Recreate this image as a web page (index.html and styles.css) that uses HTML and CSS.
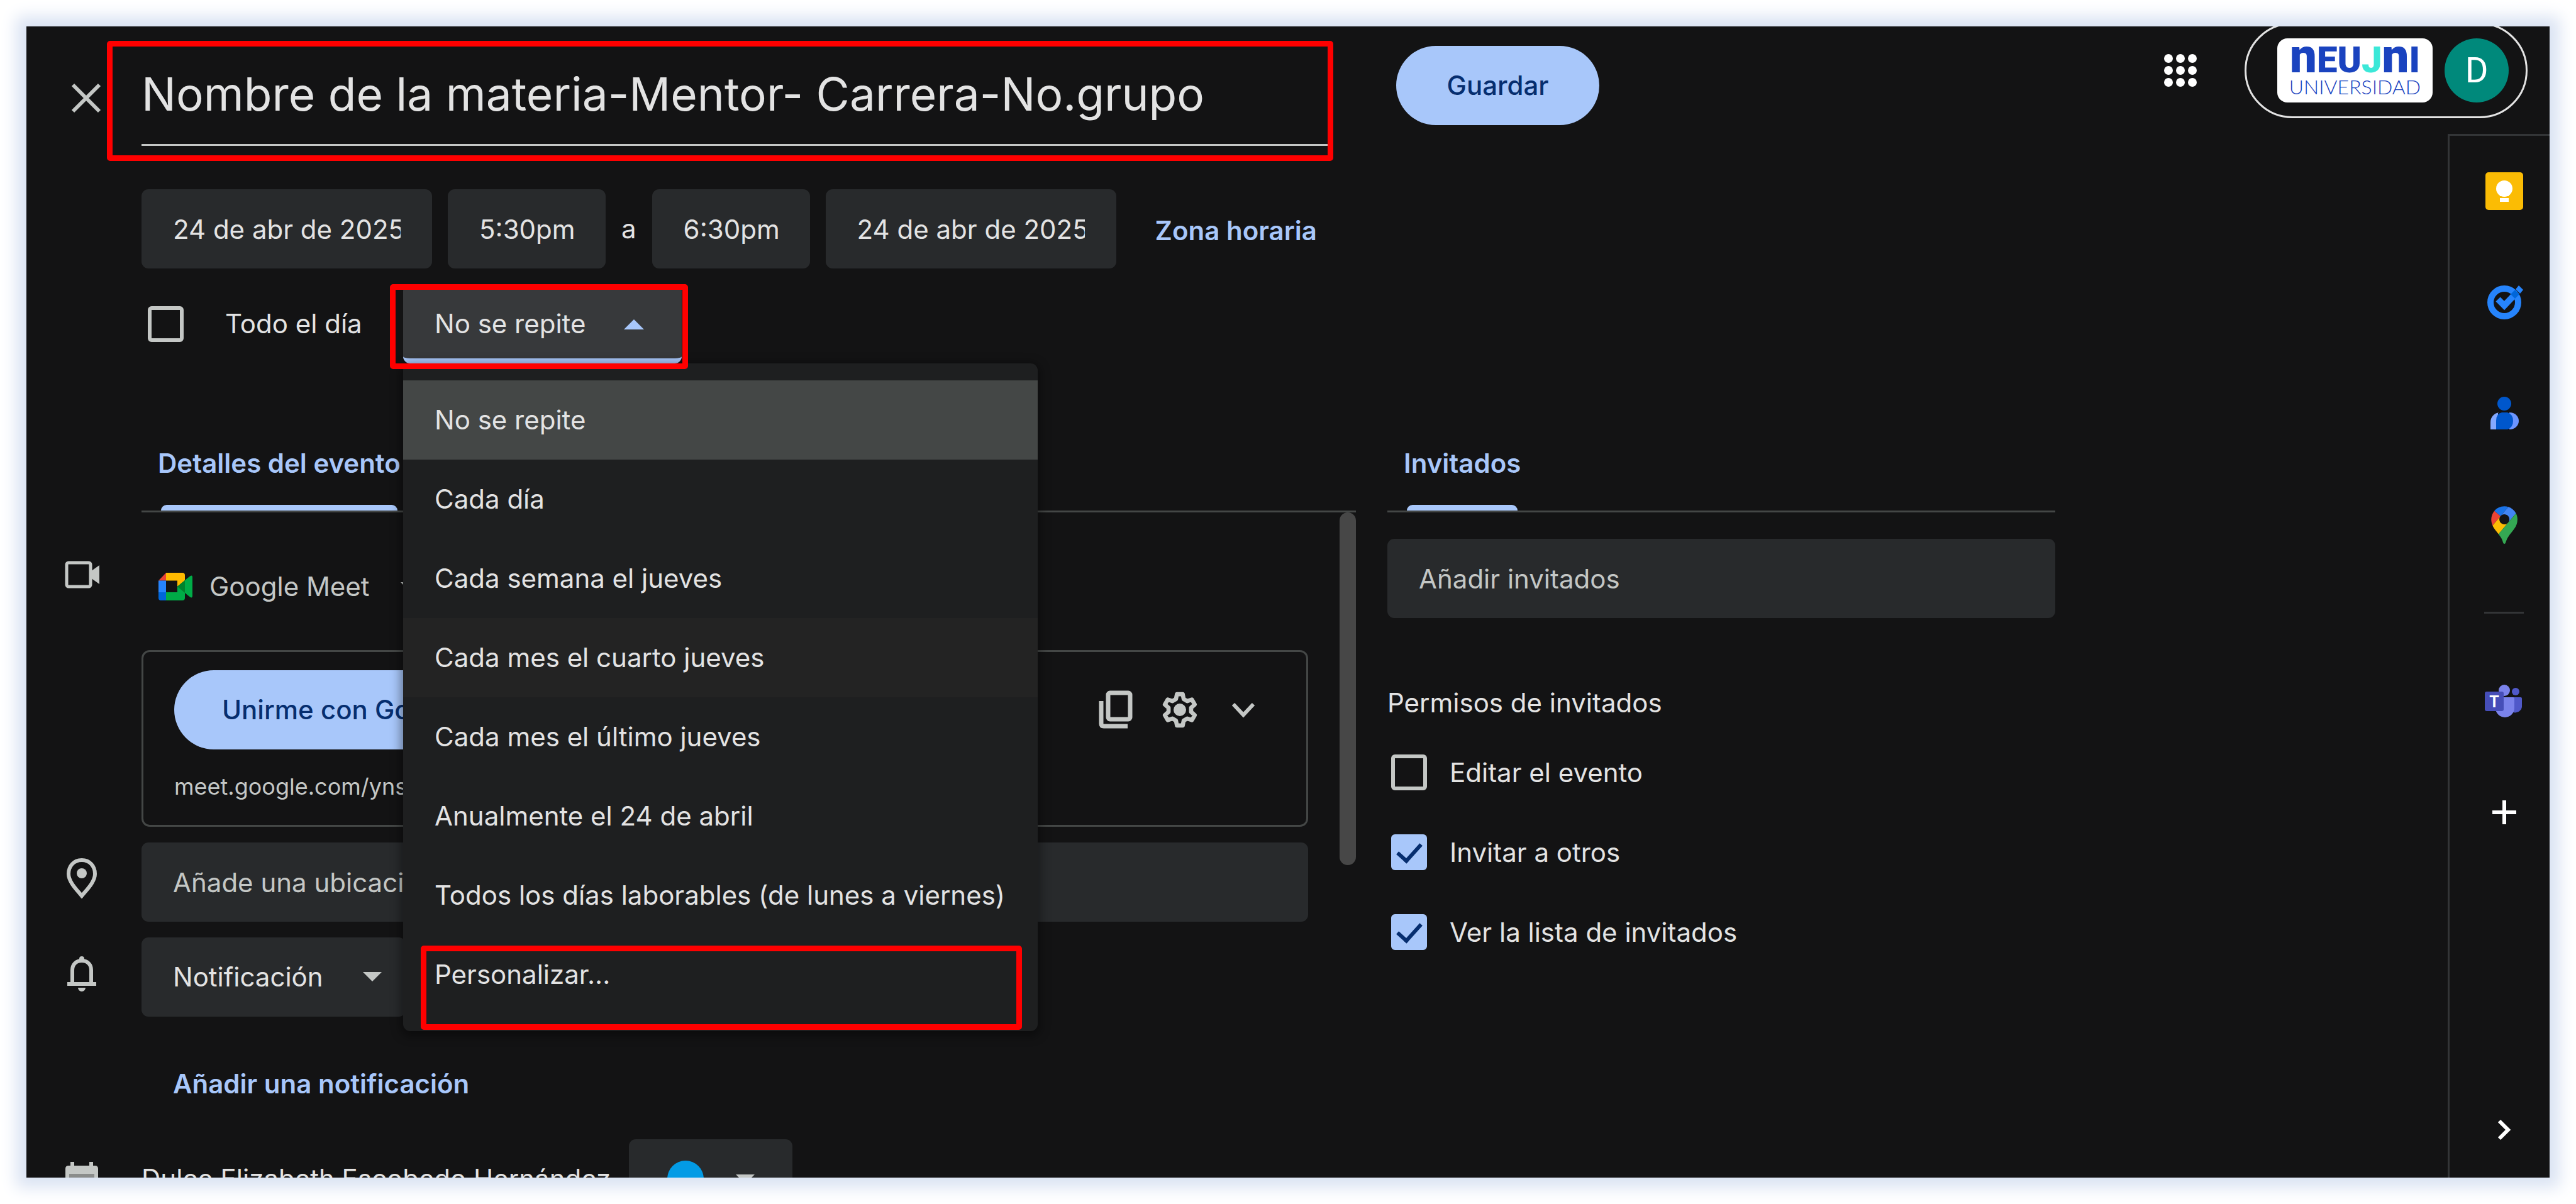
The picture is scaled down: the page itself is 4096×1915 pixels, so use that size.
FILE: index.html
```html
<!DOCTYPE html>
<html lang="es">
<head>
<meta charset="utf-8">
<meta name="viewport" content="width=device-width, initial-scale=1">
<title>Detalles del evento</title>
<link rel="stylesheet" href="styles.css">
</head>
<body>
<div class="panel">
  <header class="topbar">
    <button class="icon-button close" type="button" aria-label="Cerrar">
      <svg class="icon" viewBox="0 0 64 64"><path d="M11 11L53 53M53 11L11 53" fill="none" stroke="currentColor" stroke-width="6"/></svg>
    </button>
    <div class="title-field marked">
      <input class="title-input" type="text" aria-label="Título" value="Nombre de la materia-Mentor- Carrera-No.grupo">
    </div>
    <button class="pill-button save" type="button">Guardar</button>
    <div class="tools">
      <button class="icon-button" type="button" aria-label="Aplicaciones">
        <svg class="icon white" viewBox="0 0 64 64" fill="currentColor"><circle cx="13" cy="13" r="7"/><circle cx="32" cy="13" r="7"/><circle cx="51" cy="13" r="7"/><circle cx="13" cy="32" r="7"/><circle cx="32" cy="32" r="7"/><circle cx="51" cy="32" r="7"/><circle cx="13" cy="51" r="7"/><circle cx="32" cy="51" r="7"/><circle cx="51" cy="51" r="7"/></svg>
      </button>
      <div class="account">
        <div class="brand">
          <div class="brand-name"><span class="brand-n">n</span>EU<span class="brand-j">J</span><span class="brand-n">n</span>I</div>
          <div class="brand-sub">UNIVERSIDAD</div>
        </div>
        <button class="avatar" type="button">D</button>
      </div>
    </div>
  </header>

  <main class="event">
    <section class="when">
      <div class="when-row">
        <input class="field date" type="text" aria-label="Fecha de inicio" value="24 de abr de 2025">
        <input class="field time" type="text" aria-label="Hora de inicio" value="5:30pm">
        <span>a</span>
        <input class="field time" type="text" aria-label="Hora de fin" value="6:30pm">
        <input class="field date" type="text" aria-label="Fecha de fin" value="24 de abr de 2025">
        <button class="link-button zone" type="button">Zona horaria</button>
      </div>
      <div class="when-row repeat-row">
        <label class="all-day"><input class="check" type="checkbox">Todo el día</label>
        <div class="repeat marked">
          <select class="repeat-select" aria-label="Repetición"><option>No se repite</option></select>
          <svg class="repeat-arrow" viewBox="0 0 32 16"><path d="M0 16L16 0L32 16z" fill="#a8c7fa"/></svg>
          <ul class="menu">
            <li><button class="menu-item selected" type="button">No se repite</button></li>
            <li><button class="menu-item" type="button">Cada día</button></li>
            <li><button class="menu-item" type="button">Cada semana el jueves</button></li>
            <li><button class="menu-item hovered" type="button">Cada mes el cuarto jueves</button></li>
            <li><button class="menu-item" type="button">Cada mes el último jueves</button></li>
            <li><button class="menu-item" type="button">Anualmente el 24 de abril</button></li>
            <li><button class="menu-item" type="button">Todos los días laborables (de lunes a viernes)</button></li>
            <li class="custom marked"><button class="menu-item" type="button">Personalizar...</button></li>
          </ul>
        </div>
      </div>
    </section>

    <div class="columns">
      <section class="details">
        <div class="tabs"><button class="tab" type="button">Detalles del evento</button></div>
        <div class="scroller">
          <div class="rows">
            <div class="row">
              <svg class="icon gutter" viewBox="0 0 64 64"><rect x="8" y="13" width="38" height="38" rx="3" fill="none" stroke="currentColor" stroke-width="5"/><path d="M46 27L60 17V47L46 37z" fill="currentColor"/></svg>
              <button class="meet" type="button">
                <svg class="meet-logo" viewBox="0 0 54 44"><path fill="#ea4335" d="M0 12.500L12 0V12.500z"/><path fill="#ffba00" d="M12 0H38Q42 0 42 4V12L30 22V12.500H12z"/><path fill="#2684fc" d="M0 12.500H12V31H0z"/><path fill="#0066da" d="M0 31H12V44H4Q0 44 0 40z"/><path fill="#00ac47" d="M12 31H30V22L42 12L50 5.500Q54 3 54 7V37Q54 41 50 38.500L42 32V40Q42 44 38 44H12z"/><path fill="#00832d" d="M30 22L42 12V32z"/></svg>
                Google Meet
                <svg class="arrow-down" viewBox="0 0 30 15"><path d="M0 0H30L15 15z" fill="currentColor"/></svg>
              </button>
            </div>
            <div class="row">
              <div class="card">
                <div class="card-head">
                  <button class="pill-button join" type="button">Unirme con Google Meet</button>
                  <div class="card-actions">
                    <button class="icon-button" type="button" aria-label="Copiar"><svg class="icon" viewBox="0 0 64 64" fill="none" stroke="currentColor" stroke-width="7"><rect x="19" y="5" width="35" height="42" rx="3"/><path d="M8 18V54Q8 58 12 58H50"/></svg></button>
                    <button class="icon-button" type="button" aria-label="Ajustes"><svg class="icon" viewBox="-0.500 -0.500 25 25"><path fill="none" stroke="currentColor" stroke-width="2.600" stroke-linejoin="round" d="M10.200 2.300H13.800L14.400 5.300L16.600 6.600L19.500 5.600L21.300 8.700L19 10.700V13.300L21.300 15.300L19.500 18.400L16.600 17.400L14.400 18.700L13.800 21.700H10.200L9.600 18.700L7.400 17.400L4.500 18.400L2.700 15.300L5 13.300V10.700L2.700 8.700L4.500 5.600L7.400 6.600L9.600 5.300z"/><circle cx="12" cy="12" r="3.900" fill="currentColor"/></svg></button>
                    <button class="icon-button" type="button" aria-label="Más detalles"><svg class="icon" viewBox="0 0 64 64"><path d="M16 23L32 40L48 23" fill="none" stroke="currentColor" stroke-width="6"/></svg></button>
                  </div>
                </div>
                <a class="meet-link" href="#meet">meet.google.com/yns</a>
              </div>
            </div>
            <div class="row">
              <svg class="icon gutter" viewBox="0 0 64 64"><path d="M32 3C19 3 11 13 11 25C11 38 25 51 32 60C39 51 53 38 53 25C53 13 45 3 32 3z" fill="none" stroke="currentColor" stroke-width="6"/><circle cx="32" cy="24" r="8" fill="currentColor"/></svg>
              <input class="field location" type="text" aria-label="Ubicación" placeholder="Añade una ubicación">
            </div>
            <div class="row">
              <svg class="icon gutter" viewBox="0 0 64 64"><path d="M17 49V27C17 18 23 12 32 12S47 18 47 27V49" fill="none" stroke="currentColor" stroke-width="6"/><path d="M9 46H55V52H9zM28 12V9A4 4 0 0 1 36 9V12zM26 55H38A6 6 0 0 1 26 55z" fill="currentColor"/></svg>
              <div class="notify">
                <select class="field notify-select" aria-label="Tipo de aviso"><option>Notificación</option></select>
                <svg class="arrow-down notify-arrow" viewBox="0 0 30 15"><path d="M0 0H30L15 15z" fill="currentColor"/></svg>
              </div>
            </div>
            <div class="row add-row"><button class="link-button add" type="button">Añadir una notificación</button></div>
            <div class="row">
              <svg class="icon gutter" viewBox="0 0 64 64"><path fill="currentColor" d="M14 11H20V17H44V11H50V17H53Q58 17 58 22V64H6V22Q6 17 11 17H14z"/><path d="M12 30H52V64H12z" fill="#8a8c8b"/></svg>
              <span class="owner">Dulce Elizabeth Escobedo Hernández</span>
              <button class="field color" type="button" aria-label="Color del evento">
                <span class="dot"></span>
                <svg class="arrow-down" viewBox="0 0 30 15"><path d="M0 0H30L15 15z" fill="currentColor"/></svg>
              </button>
            </div>
          </div>
          <div class="scrollbar"></div>
        </div>
      </section>

      <section class="guests">
        <div class="tabs"><button class="tab" type="button">Invitados</button></div>
        <input class="field guest-input" type="text" aria-label="Añadir invitados" placeholder="Añadir invitados">
        <h2 class="permissions">Permisos de invitados</h2>
        <label class="option"><input class="check" type="checkbox">Editar el evento</label>
        <label class="option"><input class="check" type="checkbox" checked>Invitar a otros</label>
        <label class="option"><input class="check" type="checkbox" checked>Ver la lista de invitados</label>
      </section>
    </div>
  </main>

  <aside class="sidebar">
    <button class="side-button" type="button" aria-label="Keep"><svg class="icon" viewBox="0 0 64 64"><rect x="2" y="2" width="60" height="60" rx="5" fill="#fbbc04"/><circle cx="32" cy="28" r="13" fill="#fff"/><path d="M25 36H39V40H25zM25 43H39V49H25z" fill="#fff"/></svg></button>
    <button class="side-button" type="button" aria-label="Tasks"><svg class="icon" viewBox="0 0 64 64"><circle cx="32" cy="32" r="22" fill="none" stroke="#2684fc" stroke-width="10"/><path d="M22 27L32 37L51 17" fill="none" stroke="#2684fc" stroke-width="10"/><path d="M42 19L49 12L56 19L49 26z" fill="#0066da"/><path d="M50 11L55 5L62 12L57 18z" fill="#2684fc"/></svg></button>
    <button class="side-button" type="button" aria-label="Contactos"><svg class="icon" viewBox="0 0 64 64"><circle cx="32" cy="16" r="11" fill="#0057cc"/><path d="M24 30C15 31 10 38 10 46V57H22V30z" fill="#85a9ff"/><path d="M40 30C49 30 55 36 55 43.500S49 57 40 57z" fill="#6c95ff"/><path d="M28 30H37Q46 33 46 43.500T37 57H19V43Q19 32 28 30z" fill="#0057cc"/></svg></button>
    <button class="side-button" type="button" aria-label="Maps"><svg class="icon" viewBox="-23 -5 138 142"><path fill="#1a73e8" d="M60.200 2.200C55.800.8 51 0 46.100 0 32 0 19.300 6.400 10.800 16.500l21.800 18.300z"/><path fill="#ea4335" d="M10.800 16.500C4.100 24.500 0 34.900 0 46.100c0 8.700 1.700 15.700 4.600 22l28-33.300z"/><path fill="#4285f4" d="M46.200 28.500c9.800 0 17.700 7.900 17.700 17.700 0 4.300-1.600 8.300-4.200 11.400L87.200 24.900C81.600 14.100 71.900 5.900 60.200 2.200L32.600 34.800c3.300-3.800 8.100-6.300 13.600-6.300"/><path fill="#fbbc04" d="M46.200 63.800c-9.800 0-17.700-7.900-17.700-17.700 0-4.300 1.500-8.300 4.100-11.300l-28 33.300c4.800 10.600 12.800 19.200 21 29.900l34.100-40.500c-3.300 3.900-8.100 6.300-13.500 6.300"/><path fill="#34a853" d="M59.100 109.200c15.400-24.100 33.300-35 33.300-63 0-7.700-1.900-14.900-5.200-21.300L25.600 98c2.600 3.400 5.300 7.300 7.900 11.300 9.400 14.500 6.800 23.100 12.800 23.100s3.400-8.700 12.800-23.200"/></svg></button>
    <hr class="side-rule">
    <button class="side-button" type="button" aria-label="Teams"><svg class="icon" viewBox="0 0 64 64"><circle cx="50" cy="17" r="6" fill="#5059c9"/><path d="M46 26H58Q60 26 60 28V41A11 10 0 0 1 46 50z" fill="#5059c9"/><circle cx="32" cy="15" r="9" fill="#7b83eb"/><path d="M18 26H46Q48 26 48 28V43A15 15 0 0 1 18 43z" fill="#7b83eb"/><rect x="1" y="17" width="30" height="31" rx="3" fill="#464eb8"/><text x="16" y="42" text-anchor="middle" font-family="Roboto, sans-serif" font-weight="700" font-size="25" fill="#fff">T</text></svg></button>
    <button class="side-button" type="button" aria-label="Añadir complementos"><svg class="icon white" viewBox="0 0 64 64"><path d="M32 13V51M13 32H51" fill="none" stroke="currentColor" stroke-width="6"/></svg></button>
    <button class="side-button last" type="button" aria-label="Ocultar panel"><svg class="icon white" viewBox="0 0 64 64"><path d="M24 18L38 32L24 46" fill="none" stroke="currentColor" stroke-width="6"/></svg></button>
  </aside>
</div>
</body>
</html>
```
FILE: styles.css
```css
* {
  box-sizing: border-box;
}

body {
  margin: 0;
  padding: 42px;
  background: #fff;
  color: #e3e3e3;
  font: 42px/60px Inter, Roboto, sans-serif;
}

button,
input,
select {
  margin: 0;
  border: 0;
  padding: 0;
  background: none;
  color: inherit;
  font: inherit;
}

.panel {
  display: grid;
  grid-template-columns: minmax(0, 1fr) 162px;
  grid-template-rows: 171px minmax(0, 1fr);
  height: calc(100vh - 84px);
  overflow: hidden;
  background: #131314;
  box-shadow: 0 0 24px 16px #dae3f3;
}

.icon {
  display: block;
  flex: none;
  width: 64px;
  height: 64px;
  color: #c4c7c5;
}

.white {
  color: #fff;
}

/* Red frame that points out a step */
.marked {
  position: relative;
}

.marked::after {
  content: "";
  position: absolute;
  z-index: 3;
  border: 9px solid #f00;
  border-radius: 5px;
  pointer-events: none;
}

/* Top bar */
.topbar {
  grid-column: 1 / -1;
  display: flex;
  align-items: flex-start;
  padding-right: 35px;
}

.close {
  margin: 82px 56px 0 63px;
}

.title-field {
  flex: 0 1 1895px;
  margin-top: 28px;
}

.title-field::after {
  inset: -5px 0 -24px -55px;
}

.title-input {
  display: block;
  width: 100%;
  height: 162px;
  border-bottom: 3px solid #c4c7c5;
  font-size: 73px;
}

.pill-button {
  height: 126px;
  border-radius: 63px;
  padding: 0 76px;
  background: #a8c7fa;
  color: #062e6f;
  font-weight: 500;
}

.save {
  width: 323px;
  margin: 31px 0 0 100px;
}

.tools {
  display: flex;
  align-items: center;
  gap: 70px;
  margin: -6px 0 0 auto;
}

.account {
  display: flex;
  align-items: center;
  gap: 19px;
  height: 152px;
  padding: 0 27px 0 49px;
  border: 3px solid #e3e3e3;
  border-radius: 76px;
}

.brand {
  display: flex;
  flex-direction: column;
  align-items: center;
  justify-content: center;
  width: 247px;
  height: 102px;
  padding-bottom: 4px;
  border-radius: 16px;
  background: #fff;
  color: #1a43bf;
}

.brand-name {
  font: 900 58px/50px Roboto, sans-serif;
}

.brand-n {
  font-size: 76px;
}

.brand-j {
  color: #3be8d8;
}

.brand-sub {
  font: 300 32px/36px Lato, sans-serif;
}

.avatar {
  width: 102px;
  height: 102px;
  border-radius: 50%;
  background: #00897b;
  color: #fff;
  font-family: Roboto, sans-serif;
  font-size: 56px;
}

/* Event form */
.event {
  display: flex;
  flex-direction: column;
  min-width: 0;
}

.when {
  display: flex;
  flex-direction: column;
  gap: 25px;
  padding: 88px 0 0 183px;
}

.when-row {
  display: flex;
  align-items: center;
  gap: 25px;
}

.field {
  height: 126px;
  border-radius: 11px;
  padding: 0 50px;
  background: #282a2c;
}

.field::placeholder {
  color: #c4c7c5;
  opacity: 1;
}

.date {
  width: 462px;
}

.time {
  width: 251px;
}

.link-button {
  color: #a8c7fa;
  font-weight: 600;
}

.zone {
  padding: 6px 0 0 37px;
}

.repeat-row {
  gap: 0;
}

.all-day {
  display: flex;
  align-items: center;
  gap: 66px;
  width: 416px;
  padding-left: 10px;
}

.check {
  appearance: none;
  display: grid;
  place-items: center;
  flex: none;
  width: 57px;
  height: 57px;
  border: 6px solid #c4c7c5;
  border-radius: 6px;
}

.check:checked {
  border-color: #a8c7fa;
  background: #a8c7fa;
}

.check:checked::after {
  content: "";
  width: 16px;
  height: 32px;
  margin-bottom: 8px;
  border: solid #062e6f;
  border-width: 0 6px 6px 0;
  transform: rotate(42deg);
}

.repeat {
  width: 443px;
}

.repeat::after {
  inset: 0 -10px -9px -21px;
}

.repeat-select {
  appearance: none;
  display: block;
  width: 100%;
  height: 126px;
  border-bottom: 8px solid #a8c7fa;
  border-radius: 11px;
  padding: 8px 50px 0;
  background: #37393b;
}

.repeat-arrow {
  position: absolute;
  top: 56px;
  right: 60px;
  width: 32px;
  height: 16px;
}

.menu {
  position: absolute;
  z-index: 2;
  top: 100%;
  left: 0;
  width: 1009px;
  margin: 0;
  padding: 27px 0;
  border-radius: 11px;
  background: #1e1f20;
  box-shadow: 0 4px 16px 4px rgb(0 0 0 / 40%);
  list-style: none;
}

.menu-item {
  display: block;
  width: 100%;
  height: 126px;
  padding: 0 50px;
  text-align: left;
  white-space: nowrap;
}

.selected {
  background: #444746;
}

.hovered {
  background: #232323;
}

.custom::after {
  inset: 17px 25px -25px 28px;
}

.columns {
  display: grid;
  grid-template-columns: minmax(0, 2114fr) minmax(0, 1062fr);
  gap: 50px;
  padding: 129px 624px 0 0;
}

.details .tabs {
  margin-left: 183px;
}

.tabs {
  display: flex;
  padding-left: 26px;
  border-bottom: 3px solid #444746;
}

.tab {
  display: flex;
  flex-direction: column;
  gap: 36px;
  color: #a8c7fa;
  font-weight: 600;
}

.tab::after {
  content: "";
  align-self: stretch;
  height: 9px;
  margin: 0 5px;
  border-radius: 9px 9px 0 0;
  background: #a8c7fa;
}

.scroller {
  display: flex;
  align-items: flex-start;
  gap: 50px;
}

.rows {
  flex: 1;
  display: flex;
  flex-direction: column;
  gap: 25px;
  min-width: 0;
  padding-top: 42px;
}

.scrollbar {
  width: 26px;
  height: 561px;
  border-radius: 13px;
  background: #474747;
}

.row {
  display: grid;
  grid-template-columns: 183px minmax(0, 1fr);
  align-items: start;
}

.row > :not(.gutter) {
  grid-column: 2;
}

.gutter {
  margin: 25px 0 0 56px;
}

.row > .owner {
  display: inline;
  line-height: 126px;
}

.row:last-child {
  grid-template-columns: 183px auto 1fr;
}

.row > .color {
  grid-column: 3;
  display: flex;
  align-items: center;
  gap: 51px;
  width: 260px;
  margin-left: 29px;
  padding: 0 56px 0 61px;
}

.dot {
  width: 58px;
  height: 58px;
  border-radius: 50%;
  background: #039be5;
}

.meet {
  display: flex;
  align-items: center;
  gap: 27px;
  height: 152px;
  padding-left: 27px;
  color: #c4c7c5;
}

.meet-logo {
  width: 54px;
  height: 44px;
}

.arrow-down {
  width: 30px;
  height: 15px;
  color: #c4c7c5;
}

.meet .arrow-down {
  margin-left: 22px;
}

.card {
  display: flex;
  flex-direction: column;
  gap: 34px;
  padding: 29px 49px 36px;
  border: 3px solid #444746;
  border-radius: 13px;
}

.card-head,
.card-actions {
  display: flex;
  align-items: center;
}

.card-head {
  justify-content: space-between;
}

.card-actions {
  gap: 37px;
  margin-right: 19px;
}

.meet-link {
  color: #c4c7c5;
  font-size: 36px;
  line-height: 50px;
  text-decoration: none;
}

.notify {
  position: relative;
}

.notify-select {
  appearance: none;
  width: 420px;
}

.notify-arrow {
  position: absolute;
  top: 55px;
  left: 352px;
}

.add-row {
  padding-top: 18px;
}

.add {
  height: 127px;
  padding-left: 50px;
  text-align: left;
}

/* Guests */
.guests {
  display: flex;
  flex-direction: column;
}

.guest-input {
  width: 100%;
  margin-top: 42px;
}

.permissions {
  margin: 105px 0 17px;
  font-size: 42px;
  font-weight: 400;
}

.option {
  display: flex;
  align-items: center;
  gap: 36px;
  height: 127px;
  padding-left: 6px;
}

/* Side panel */
.sidebar {
  display: flex;
  flex-direction: column;
  align-items: center;
  gap: 50px;
  padding: 24px 0 13px 14px;
  border: solid #333537;
  border-width: 3px 0 0 3px;
}

.side-button {
  display: grid;
  place-items: center;
  width: 127px;
  height: 127px;
}

.side-rule {
  width: 63px;
  margin: 25px 0;
  border: 0;
  border-top: 3px solid #333537;
}

.last {
  margin-top: auto;
}
```
